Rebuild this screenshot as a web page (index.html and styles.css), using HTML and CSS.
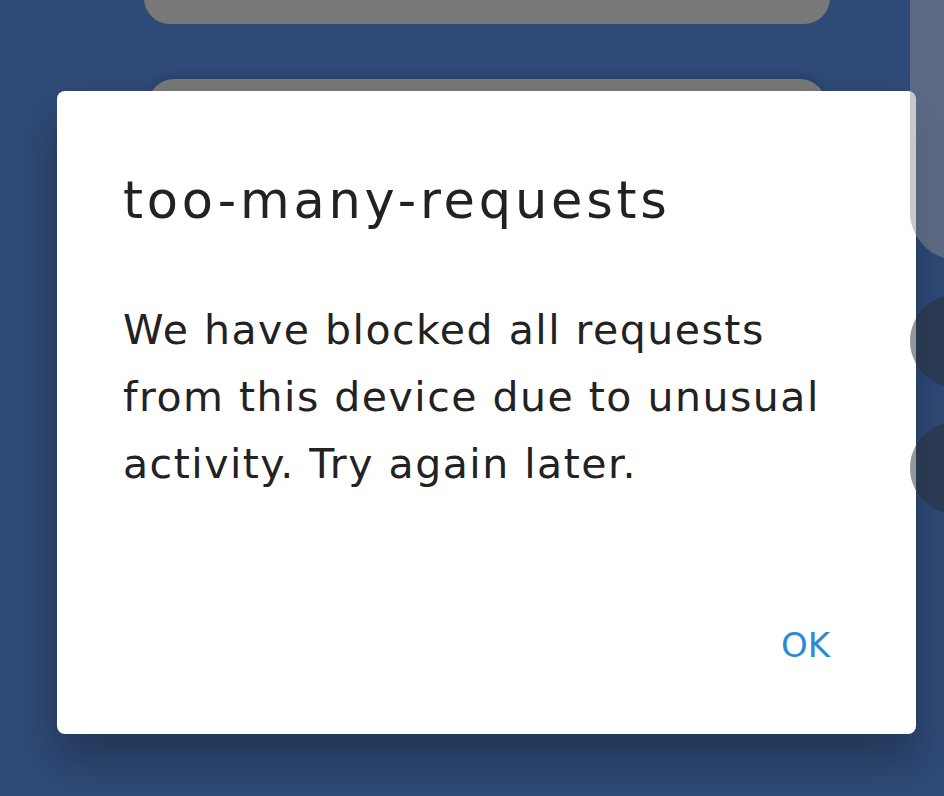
FILE: index.html
```html
<!DOCTYPE html>
<html lang="en">
<head>
    <meta charset="UTF-8">
    <meta name="viewport" content="width=device-width, initial-scale=1.0">
    <title>too-many-requests</title>
    <link rel="stylesheet" href="styles.css">
</head>
<body>
    <div class="screen">
        <!-- page content behind the dialog -->
        <div class="cards">
            <div class="card card-first"></div>
            <div class="card card-second"></div>
        </div>
        <div class="side-panel"></div>
        <div class="side-dot dot-one"></div>
        <div class="side-dot dot-two"></div>

        <!-- Dialog -->
        <div class="backdrop">
            <div class="dialog">
                <h2 class="dialog-title">too-many-requests</h2>
                <p class="dialog-text">We have blocked all requests from this device due to unusual activity. Try again later.</p>
                <div class="dialog-actions">
                    <button class="ok-button">OK</button>
                </div>
            </div>
        </div>
    </div>
</body>
</html>
```

FILE: styles.css
```css
body {
    margin: 0;
    background-color: #2f4a77;
    font-family: 'DejaVu Sans', 'Open Sans', sans-serif;
    overflow: hidden;
}

.screen {
    position: relative;
    width: 944px;
    height: 796px;
    overflow: hidden;
    background-color: #2f4a77;
}

.cards {
    display: flex;
    flex-direction: column;
    gap: 55px;
    padding-left: 144px;
    width: 686px;
}

.card {
    background-color: #787878;
    border-radius: 26px;
}

.card-first {
    height: 80px;
    margin-top: -56px;
}

.card-second {
    height: 200px;
    margin: 0 4px;
    box-shadow: 0 -4px 6px rgba(0, 0, 0, 0.12);
}

.side-panel {
    position: absolute;
    top: -20px;
    left: 910px;
    width: 80px;
    height: 280px;
    border-bottom-left-radius: 48px;
    background-color: rgba(139, 140, 148, 0.48);
    z-index: 3;
}

.side-dot {
    position: absolute;
    left: 910px;
    width: 92px;
    height: 92px;
    border-radius: 50%;
    background-color: rgba(40, 45, 55, 0.5);
    z-index: 3;
}

.dot-one {
    top: 295px;
}

.dot-two {
    top: 422px;
}

.backdrop {
    position: absolute;
    top: 0;
    left: 0;
    right: 0;
    bottom: 0;
    padding: 91px 0 0 57px;
    z-index: 2;
}

.dialog {
    width: 859px;
    height: 643px;
    box-sizing: border-box;
    background-color: #ffffff;
    border-radius: 8px;
    box-shadow: 0 26px 44px rgba(0, 0, 0, 0.28);
    padding: 0 66px 65px;
    display: flex;
    flex-direction: column;
    color: #222222;
}

.dialog-title {
    margin: 82px 0 0;
    font-size: 51px;
    line-height: 56px;
    font-weight: 400;
    letter-spacing: 3.8px;
}

.dialog-text {
    margin: 68px 0 0;
    font-size: 41px;
    line-height: 67px;
    letter-spacing: 1.5px;
}

.dialog-actions {
    margin-top: auto;
    display: flex;
    justify-content: flex-end;
    padding-right: 20px;
}

.ok-button {
    border: none;
    background: none;
    padding: 0;
    font-family: inherit;
    font-size: 34px;
    line-height: 48px;
    color: #2d8ad8;
}
```
